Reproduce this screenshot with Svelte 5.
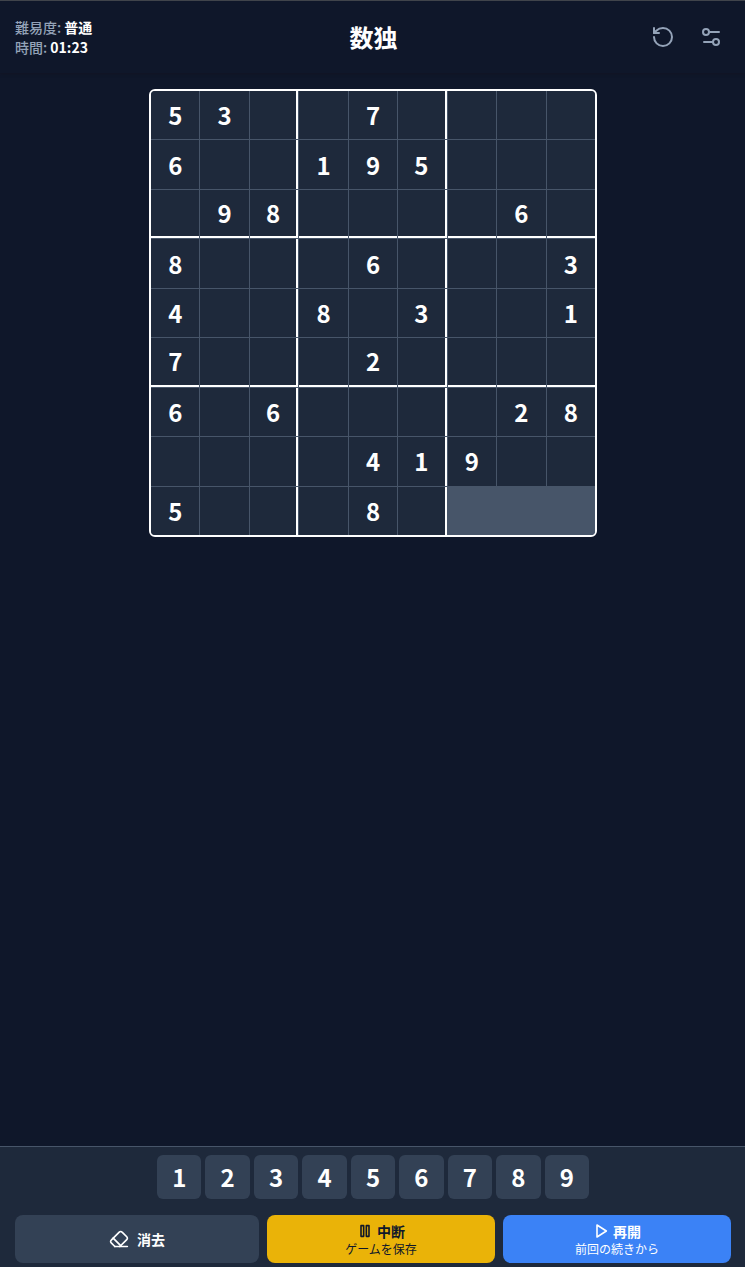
<script>
  const rows = ['53  7    ', '6  195   ', ' 98    6 ', '8   6   3', '4  8 3  1', '7   2    ', '6 6    28', '    419  ', '5   8    '];
  const selected = (r, c) => r === 8 && c > 5;
</script>

<div class="app">
  <header>
    <div class="info">
      <div>難易度: <b>普通</b></div>
      <div>時間: <b>01:23</b></div>
    </div>
    <h1>数独</h1>
    <div class="tools">
      <button aria-label="reset"><svg width="24" height="24" viewBox="0 0 24 24"><path d="M3 12a9 9 0 1 0 9-9 9.75 9.75 0 0 0-6.74 2.74L3 8" /><path d="M3 3v5h5" /></svg></button>
      <button aria-label="settings"><svg width="24" height="24" viewBox="0 0 24 24"><path d="M20 7h-9M14 17H5" /><circle cx="17" cy="17" r="3" /><circle cx="7" cy="7" r="3" /></svg></button>
    </div>
  </header>
  <main>
    <div class="board">
      {#each rows as row, r}
        {#each row.split('') as v, c}
          <div class="cell" class:selected={selected(r, c)} class:right={c === 2 || c === 5} class:bottom={r === 2 || r === 5}>{v.trim()}</div>
        {/each}
      {/each}
    </div>
  </main>
  <footer>
    <div class="pad">
      {#each [1, 2, 3, 4, 5, 6, 7, 8, 9] as n}
        <button>{n}</button>
      {/each}
    </div>
    <div class="actions">
      <button class="erase">
        <svg width="20" height="20" viewBox="0 0 24 24"><path d="m7 21-4.3-4.3c-1-1-1-2.5 0-3.4l9.6-9.6c1-1 2.5-1 3.4 0l5.6 5.6c1 1 1 2.5 0 3.4L13 21" /><path d="M22 21H7" /><path d="m5 11 9 9" /></svg>
        <span>消去</span>
      </button>
      <button class="pause">
        <span class="line"><svg width="16" height="16" viewBox="0 0 24 24"><rect x="14" y="4" width="4" height="16" /><rect x="6" y="4" width="4" height="16" /></svg><span>中断</span></span>
        <small>ゲームを保存</small>
      </button>
      <button class="resume">
        <span class="line"><svg width="16" height="16" viewBox="0 0 24 24"><path d="M6 3l14 9-14 9z" /></svg><span>再開</span></span>
        <small>前回の続きから</small>
      </button>
    </div>
  </footer>
</div>

<style>
  :global(body) { background: #0f172a; }
  .app {
    box-sizing: border-box;
    height: 1267px;
    display: flex;
    flex-direction: column;
    overflow: hidden;
    background: #0f172a;
    color: #fff;
    border-top: 1px solid #40444b;
    font-family: "Noto Sans CJK JP", sans-serif;
  }
  button {
    border: 0;
    padding: 0;
    margin: 0;
    background: none;
    color: inherit;
    font: inherit;
  }
  svg {
    display: block;
    fill: none;
    stroke: currentColor;
    stroke-width: 2;
    stroke-linecap: round;
    stroke-linejoin: round;
  }
  header {
    height: 72px;
    flex: none;
    display: grid;
    grid-template-columns: 1fr auto 1fr;
    align-items: center;
    padding: 0 14px 0 15px;
    box-shadow: 0 1px 3px rgba(20, 18, 30, .5);
  }
  .info { font-size: 14px; line-height: 20px; font-weight: 500; color: #94a3b8; }
  .info b { color: #fff; }
  h1 { margin: 0; padding-left: 1px; font-size: 24px; line-height: 32px; font-weight: 700; }
  .tools { display: flex; justify-content: flex-end; gap: 8px; color: #94a3b8; }
  .tools button { padding: 8px; }
  main { flex: 1; display: flex; justify-content: center; align-items: flex-start; padding: 16px 0 0 1px; }
  .board {
    box-sizing: border-box;
    width: 448px;
    height: 448px;
    border: 2px solid #fff;
    border-radius: 6px;
    overflow: hidden;
    display: grid;
    grid-template-columns: repeat(9, minmax(0, 1fr));
    grid-template-rows: repeat(9, minmax(0, 1fr));
    gap: 1px;
    background: #475569;
  }
  .cell {
    display: flex;
    align-items: center;
    justify-content: center;
    background: #1e293b;
    font-size: 24px;
    line-height: 32px;
    font-weight: 700;
  }
  .selected { background: #475569; }
  .right { border-right: 2px solid #fff; }
  .bottom { border-bottom: 2px solid #fff; }
  footer { flex: none; height: 120px; background: #1e293b; border-top: 1px solid #475569; }
  .pad {
    width: 432px;
    margin-left: 157px;
    display: grid;
    grid-template-columns: repeat(9, 1fr);
    gap: 4px;
    padding-top: 8px;
  }
  .pad button {
    height: 44px;
    border-radius: 6px;
    background: #334155;
    font-size: 24px;
    line-height: 32px;
    font-weight: 700;
  }
  .actions { display: flex; gap: 8px; padding: 16px 14px 0 15px; }
  .actions button {
    flex: 0 0 228px;
    height: 48px;
    border-radius: 8px;
    display: flex;
    flex-direction: column;
    align-items: center;
    justify-content: center;
    font-size: 14px;
    line-height: 20px;
    font-weight: 700;
  }
  .actions .erase { flex: 1; flex-direction: row; gap: 8px; background: #334155; }
  .actions .pause { background: #eab308; color: #0f172a; }
  .actions .resume { background: #3b82f6; }
  .line { display: flex; align-items: center; gap: 4px; }
  .line svg { stroke-width: 2.4; }
  small { font-size: 12px; line-height: 16px; font-weight: 400; }
</style>
